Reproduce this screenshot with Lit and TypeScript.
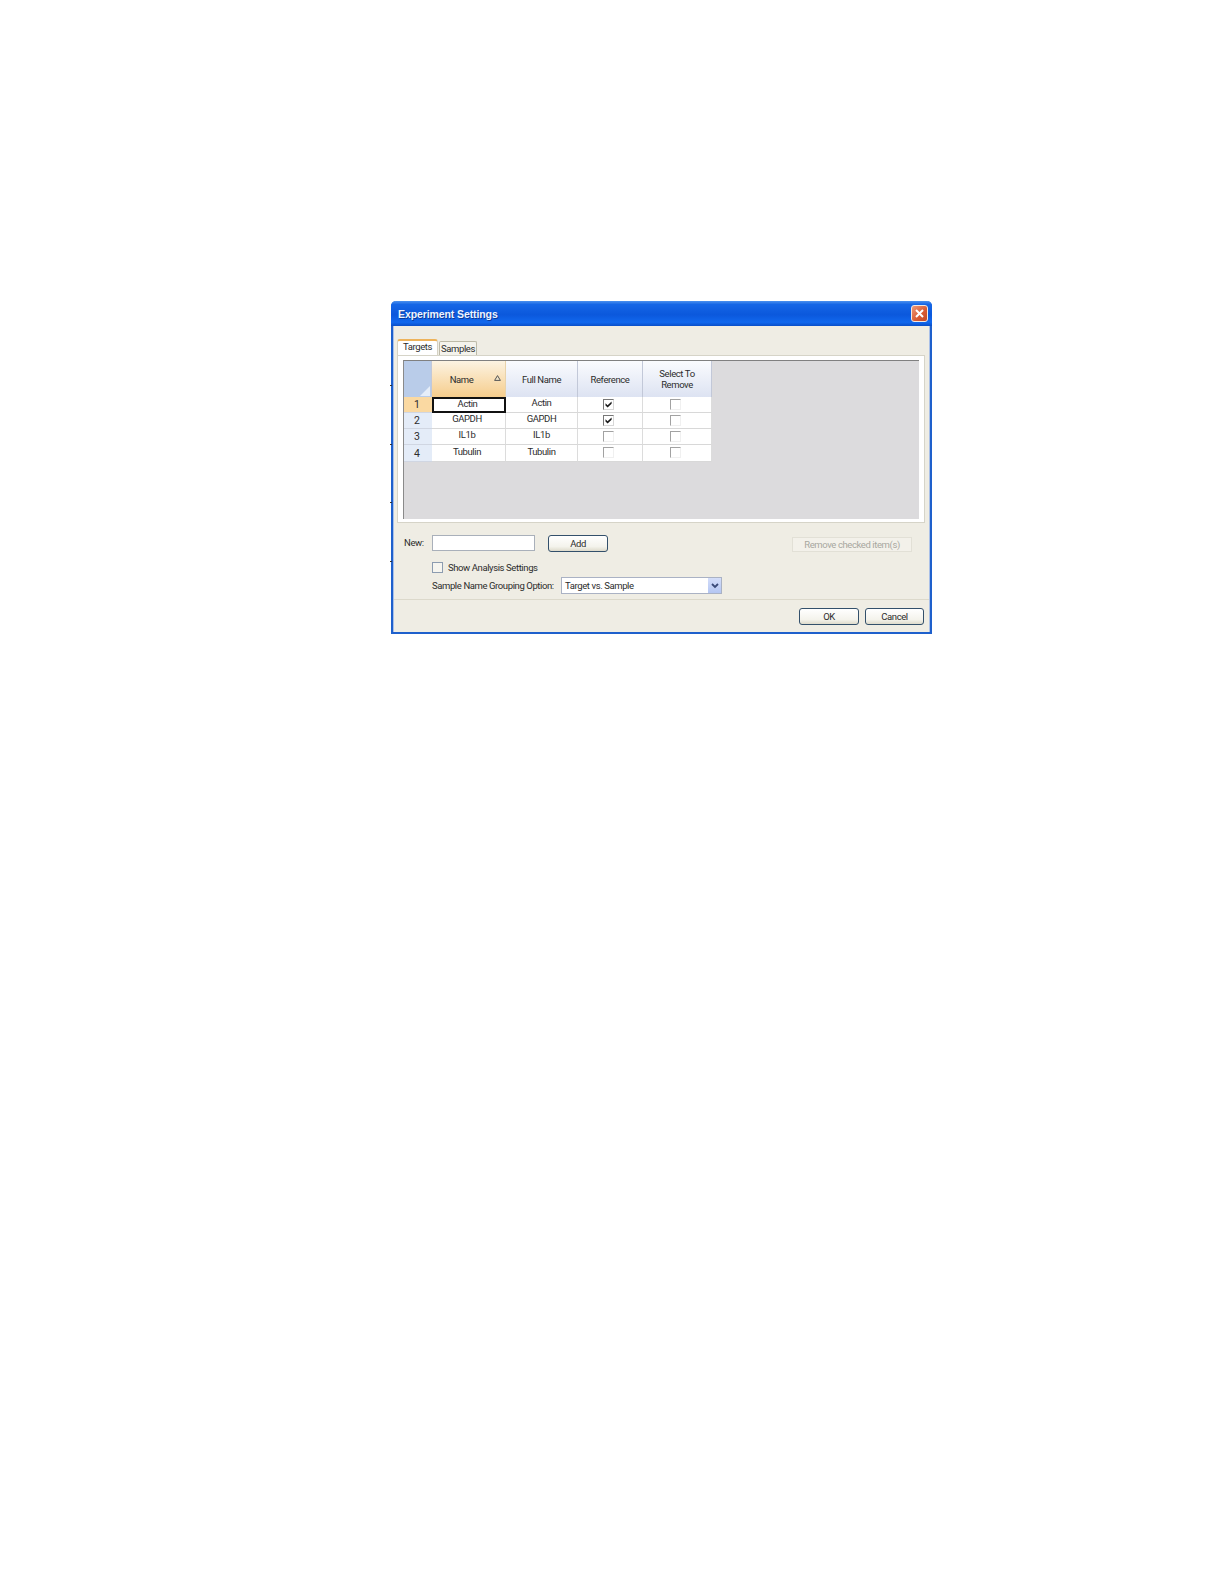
import { LitElement, html, css, svg } from "lit";
import { customElement } from "lit/decorators.js";

const rows = [
  { n: "1", name: "Actin", full: "Actin", ref: true },
  { n: "2", name: "GAPDH", full: "GAPDH", ref: true },
  { n: "3", name: "IL1b", full: "IL1b", ref: false },
  { n: "4", name: "Tubulin", full: "Tubulin", ref: false },
];

const ticks = [385, 444, 502, 561];

@customElement("app-root")
export class AppRoot extends LitElement {
  static styles = css`
    :host { display: block; width: 1224px; height: 1584px; background: #fff; padding: 301px 0 0 391px; box-sizing: border-box; position: relative;
      font-family: Roboto, "Liberation Sans", Arial, sans-serif; font-size: 9.5px; letter-spacing: -.4px; color: #2c2c2c; white-space: nowrap; }
    .tick { position: absolute; left: 390px; width: 2px; height: 1px; background: #333; }
    .win { width: 541px; height: 333px; box-sizing: border-box; display: flex; flex-direction: column; background: #efede4;
      border: 2px solid #1e60cc; border-top: 0; border-radius: 5px 5px 0 0; }
    .title { height: 25px; margin: 0 -2px; flex: none; display: flex; align-items: center; justify-content: space-between; padding: 0 4px 0 7px; box-sizing: border-box; border-radius: 5px 5px 0 0;
      background: linear-gradient(#4a90ee 0, #1566e6 14%, #0b58dc 55%, #1168ee 85%, #0a4fc8 100%);
      font-family: "Liberation Sans", Arial, sans-serif; color: #eef4ff; font-weight: bold; font-size: 10.5px; letter-spacing: -.1px; text-shadow: 1px 1px 0 #0a3a9a; }
    .close { width: 17px; height: 17px; display: block; border: 1px solid #f4e8e0; border-radius: 3px; box-sizing: border-box; background: linear-gradient(135deg, #ee9a78, #d85a32 60%, #c04a28); }
    .body { flex: 1; display: flex; flex-direction: column; padding-top: 13px; border-left: 1px solid #a9c0e8; border-right: 1px solid #a9c0e8; }
    .tabs { display: flex; align-items: flex-end; height: 16px; margin-left: 3px; flex: none; }
    .tab { box-sizing: border-box; text-align: center; }
    .tab.on { width: 41px; height: 16px; background: #fff; border: 1px solid #d5d2c4; border-top: 2px solid #eeb35a; border-bottom: 0; border-radius: 3px 3px 0 0; line-height: 11px; }
    .tab.off { width: 38px; height: 14px; margin-left: 1px; background: #f4f3ec; border: 1px solid #bdbaa8; border-bottom: 0; border-radius: 2px 2px 0 0; line-height: 14px; }
    .panel { margin-left: 3px; width: 528px; height: 168px; box-sizing: border-box; padding: 4px 5px 3px 5px; background: #fff; border: 1px solid #d6d4c8; flex: none; }
    .grid { height: 100%; box-sizing: border-box; background: #dcdbdd; border-top: 1px solid #808080; border-left: 1px solid #8a8a8a; }
    .table { display: grid; grid-template-columns: 28px 74px 72px 65px 69px; grid-template-rows: 36px 16px 16px 16px 17px; width: 308px; }
    .hd { display: flex; align-items: center; justify-content: center; text-align: center; line-height: 11px; background: linear-gradient(#fafbfe, #dde3f2); border-right: 1px solid #c2c8d8; box-sizing: border-box; position: relative; }
    .hd.corner { background: #b9cce9; }
    .hd.sel { background: linear-gradient(#fcf3e2, #f6cd8c); padding-right: 14px; border-right-color: #e9d3ab; }
    .sort { position: absolute; right: 4px; top: 14px; }
    .cornermark { position: absolute; right: 1px; bottom: 1px; }
    .rh { background: #e4ecf8; border-bottom: 1px solid #d0d6e2; display: flex; align-items: center; justify-content: center; padding-right: 2px; font-size: 10.5px; letter-spacing: 0; box-sizing: border-box; }
    .rh.sel { background: #fad9a2; }
    .c { background: #fff; border-right: 1px solid #dcdcdc; border-bottom: 1px solid #d8d8d8; box-sizing: border-box; display: flex; align-items: center; justify-content: center; padding-bottom: 4px; }
    .c.name { padding-right: 3px; }
    .c.active { border: 2px solid #111; padding-bottom: 4px; }
    .c.chk { padding: 2px 4px 0 0; align-items: flex-start; }
    .box { width: 11px; height: 11px; box-sizing: border-box; border: 1px solid; border-color: #a2a2a2 #f0f0f0 #f0f0f0 #a2a2a2; display: block; }
    .box.on { border-color: #777 #d8d8d8 #d8d8d8 #777; }
    .row1 { display: flex; align-items: flex-start; margin-top: 12px; padding-right: 17px; flex: none; }
    .lbl1 { width: 38px; padding-left: 10px; box-sizing: border-box; line-height: 15px; flex: none; }
    .input { width: 103px; height: 16px; box-sizing: border-box; background: #fff; border: 1px solid #a9b0ba; }
    .btn { box-sizing: border-box; height: 17px; border: 1px solid #33506b; border-radius: 3px; background: linear-gradient(#fff, #f4f3ec 70%, #dedbcc); display: flex; align-items: center; justify-content: center; }
    .add { width: 60px; margin-left: 13px; }
    .remove { width: 120px; height: 15px; margin: 2px 0 0 auto; border: 1px solid #e2e0d6; background: #f3f1ea; border-radius: 0; color: #a8a79f; }
    .row2 { display: flex; align-items: center; gap: 5px; margin-top: 10px; padding-left: 38px; height: 11px; flex: none; }
    .cb { width: 11px; height: 11px; box-sizing: border-box; border: 1px solid #8c9cb0; background: #f6f5ef; }
    .row3 { display: flex; align-items: center; margin-top: 4px; padding-left: 38px; height: 17px; flex: none; }
    .lbl3 { width: 129px; flex: none; }
    .combo { width: 161px; height: 17px; box-sizing: border-box; background: #fff; border: 1px solid #aab2c4; display: flex; align-items: center; justify-content: space-between; padding-left: 3px; }
    .arrow { width: 13px; height: 15px; background: linear-gradient(#d4defa, #b4c6f2); display: flex; align-items: center; justify-content: center; }
    .sep { height: 1px; background: #dcd9cb; margin-top: 5px; flex: none; }
    .foot { display: flex; justify-content: flex-end; gap: 6px; padding: 8px 5px 0 0; }
    .ok { width: 60px; }
    .cancel { width: 59px; }
  `;

  private box(on: boolean) {
    return html`<svg class="box ${on ? "on" : ""}" viewBox="0 0 9 9" width="11" height="11">
      ${on ? svg`<path d="M1.5 3.2 L3.6 5.2 L7.6 1.6 L7.6 3.8 L3.6 7.6 L1.5 5.6 Z" fill="#1a1a1a"></path>` : ""}
    </svg>`;
  }

  render() {
    return html`
      ${ticks.map((t) => html`<div class="tick" style="top:${t}px"></div>`)}
      <div class="win">
        <div class="title">
          <span>Experiment Settings</span>
          <svg class="close" viewBox="0 0 15 15"><path d="M4 4 L11 11 M11 4 L4 11" stroke="#fff" stroke-width="2" fill="none"></path></svg>
        </div>
        <div class="body">
          <div class="tabs"><div class="tab on">Targets</div><div class="tab off">Samples</div></div>
          <div class="panel">
            <div class="grid">
              <div class="table">
                <div class="hd corner"><svg class="cornermark" width="10" height="10" viewBox="0 0 10 10"><path d="M10 0 V10 H0 Z" fill="#e6eef9"></path></svg></div>
                <div class="hd sel">Name<svg class="sort" width="7" height="6" viewBox="0 0 7 6"><path d="M3.5 .6 L6.4 5.4 H.6 Z" fill="#efe3c8" stroke="#555"></path></svg></div>
                <div class="hd">Full Name</div>
                <div class="hd">Reference</div>
                <div class="hd">Select To<br />Remove</div>
                ${rows.map((r, i) => html`
                  <div class="rh ${i === 0 ? "sel" : ""}">${r.n}</div>
                  <div class="c name ${i === 0 ? "active" : ""}">${r.name}</div>
                  <div class="c">${r.full}</div>
                  <div class="c chk">${this.box(r.ref)}</div>
                  <div class="c chk">${this.box(false)}</div>
                `)}
              </div>
            </div>
          </div>
          <div class="row1">
            <div class="lbl1">New:</div>
            <div class="input"></div>
            <div class="btn add">Add</div>
            <div class="btn remove">Remove checked item(s)</div>
          </div>
          <div class="row2"><div class="cb"></div><span>Show Analysis Settings</span></div>
          <div class="row3">
            <div class="lbl3">Sample Name Grouping Option:</div>
            <div class="combo"><span>Target vs. Sample</span>
              <div class="arrow"><svg width="8" height="6" viewBox="0 0 8 6"><path d="M1 1 L4 4 L7 1" stroke="#3a4a78" stroke-width="1.8" fill="none"></path></svg></div>
            </div>
          </div>
          <div class="sep"></div>
          <div class="foot"><div class="btn ok">OK</div><div class="btn cancel">Cancel</div></div>
        </div>
      </div>
    `;
  }
}
